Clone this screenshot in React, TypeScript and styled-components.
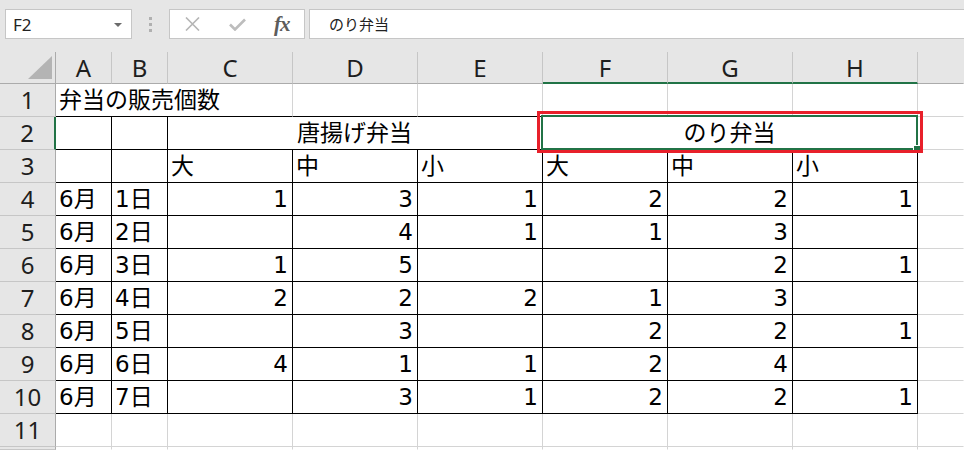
import styled, { createGlobalStyle } from "styled-components";

const GREEN = "#217346";
const GRID = "#d4d4d4";
const INK = "#000";
const EDGE = "transparent";

const GlobalStyle = createGlobalStyle`
  html, body {
    margin: 0;
    padding: 0;
    background: #fff;
    overflow: hidden;
  }
`;

const Window = styled.div`
  position: relative;
  width: 964px;
  height: 450px;
  overflow: hidden;
  background: #fff;
  font-family: "Noto Sans", sans-serif;
`;

/* ---------- formula bar ---------- */

const FormulaBar = styled.div`
  height: 52px;
  box-sizing: border-box;
  padding: 9px 0 0 5px;
  background: #e6e6e6;
  display: flex;
  align-items: flex-start;
`;

const Field = styled.div`
  height: 30px;
  box-sizing: border-box;
  background: #fff;
  border: 1px solid #c6c6c6;
  display: flex;
  align-items: center;
`;

const NameBox = styled(Field)`
  width: 127px;
  padding: 1px 9px 0 7px;
  justify-content: space-between;
  font-size: 17px;
  color: #222;
`;

const Caret = styled.span`
  width: 0;
  height: 0;
  border-left: 4px solid transparent;
  border-right: 4px solid transparent;
  border-top: 4px solid #6b6b6b;
`;

const Grip = styled.div`
  width: 37px;
  height: 30px;
  display: flex;
  flex-direction: column;
  align-items: center;
  justify-content: center;
  gap: 3px;
`;

const Dot = styled.span`
  width: 3px;
  height: 3px;
  background: #b0b0b0;
`;

const FxBox = styled(Field)`
  width: 136px;
`;

const IconSlot = styled.div`
  width: 45px;
  height: 100%;
  display: flex;
  align-items: center;
  justify-content: center;
`;

const FxGlyph = styled.span`
  font-family: "Liberation Serif", serif;
  font-style: italic;
  font-weight: bold;
  font-size: 21px;
  color: #5c5c5c;
  letter-spacing: -1px;
`;

const FormulaInput = styled(Field)`
  flex: 1;
  margin: 0 -2px 0 4px;
  padding: 0 0 1px 19px;
  font-family: "Noto Sans CJK JP", sans-serif;
  font-size: 15px;
  color: #222;
`;

/* ---------- sheet ---------- */

const Sheet = styled.div`
  display: grid;
  grid-template-columns: 56px 56px 56px repeat(6, 125px) 1fr;
  grid-template-rows: 32px repeat(11, 33px) 1fr;
  height: 398px;
`;

const Head = styled.div`
  box-sizing: border-box;
  background: #e6e6e6;
  color: #1e1e1e;
  font-family: "Noto Sans", sans-serif;
  font-size: 24px;
  text-align: center;
  white-space: nowrap;
`;

const Corner = styled(Head)`
  border-right: 1px solid #ababab;
  border-bottom: 1px solid #ababab;
  display: flex;
  align-items: flex-end;
  justify-content: flex-end;
  padding: 0 3px 4px 0;
`;

const CornerMark = styled.span`
  width: 24px;
  height: 23px;
  background: #b4b4b4;
  clip-path: polygon(100% 0, 100% 100%, 0 100%);
`;

const ColHead = styled(Head)<{ $active?: boolean; $last?: boolean }>`
  line-height: 31px;
  border-right: 1px solid ${(p) => (p.$last ? "transparent" : "#c6c6c6")};
  border-bottom: ${(p) => (p.$active ? `2px solid ${GREEN}` : "1px solid #ababab")};
`;

const RowHead = styled(Head)<{ $active?: boolean }>`
  line-height: 32px;
  border-bottom: 1px solid #c6c6c6;
  border-right: ${(p) => (p.$active ? `2px solid ${GREEN}` : "1px solid #ababab")};
`;

type Align = "left" | "center" | "right";

const Cell = styled.div<{ $r?: string; $b?: string; $align?: Align; $span?: number }>`
  box-sizing: border-box;
  grid-column: span ${(p) => p.$span ?? 1};
  border-right: 1px solid ${(p) => p.$r ?? GRID};
  border-bottom: 1px solid ${(p) => p.$b ?? GRID};
  padding: 0 4px 0 3px;
  font-family: "DejaVu Sans", "Noto Sans CJK JP", sans-serif;
  font-size: 23px;
  line-height: 32px;
  color: #000;
  text-align: ${(p) => p.$align ?? "left"};
  white-space: nowrap;
`;

/* ---------- overlays ---------- */

const Selection = styled.div`
  position: absolute;
  left: 541px;
  top: 115px;
  width: 377px;
  height: 35px;
  box-sizing: border-box;
  border: 2px solid ${GREEN};
  pointer-events: none;
`;

const FillHandle = styled.span`
  position: absolute;
  right: -4px;
  bottom: -4px;
  width: 6px;
  height: 6px;
  background: ${GREEN};
  border: 1px solid #fff;
  border-right: 0;
  border-bottom: 0;
`;

const Callout = styled.div`
  position: absolute;
  left: 537px;
  top: 111px;
  width: 386px;
  height: 42px;
  box-sizing: border-box;
  border: 3px solid #e8202a;
  pointer-events: none;
`;

/* ---------- data ---------- */

const letters = ["A", "B", "C", "D", "E", "F", "G", "H"];
const subHeads = ["大", "中", "小", "大", "中", "小"];
const sales: (number | null)[][] = [
  [1, 3, 1, 2, 2, 1],
  [null, 4, 1, 1, 3, null],
  [1, 5, null, null, 2, 1],
  [2, 2, 2, 1, 3, null],
  [null, 3, null, 2, 2, 1],
  [4, 1, 1, 2, 4, null],
  [null, 3, 1, 2, 2, 1],
];

function App() {
  return (
    <Window>
      <GlobalStyle />
      <FormulaBar>
        <NameBox>
          <span>F2</span>
          <Caret />
        </NameBox>
        <Grip>
          <Dot />
          <Dot />
          <Dot />
        </Grip>
        <FxBox>
          <IconSlot>
            <svg width="15" height="14" viewBox="0 0 15 14">
              <path d="M1 0.5 L14 13.5 M14 0.5 L1 13.5" stroke="#b5b5b5" strokeWidth="1.6" fill="none" />
            </svg>
          </IconSlot>
          <IconSlot>
            <svg width="17" height="13" viewBox="0 0 17 13">
              <path d="M1 6.5 L6 11.5 L16 1.5" stroke="#bdbdbd" strokeWidth="2.6" fill="none" />
            </svg>
          </IconSlot>
          <IconSlot>
            <FxGlyph>fx</FxGlyph>
          </IconSlot>
        </FxBox>
        <FormulaInput>のり弁当</FormulaInput>
      </FormulaBar>

      <Sheet>
        <Corner>
          <CornerMark />
        </Corner>
        {letters.map((l, i) => (
          <ColHead key={l} $active={i >= 5}>
            {l}
          </ColHead>
        ))}
        <ColHead $last />

        {/* row 1 */}
        <RowHead>1</RowHead>
        <Cell $span={3} $b={INK}>
          弁当の販売個数
        </Cell>
        {[0, 1, 2, 3, 4].map((i) => (
          <Cell key={i} $b={INK} />
        ))}
        <Cell $r={EDGE} />

        {/* row 2 */}
        <RowHead $active>2</RowHead>
        <Cell $r={INK} $b={INK} />
        <Cell $r={INK} $b={INK} />
        <Cell $span={3} $r={INK} $b={INK} $align="center">
          唐揚げ弁当
        </Cell>
        <Cell $span={3} $r={INK} $b={INK} $align="center">
          のり弁当
        </Cell>
        <Cell $r={EDGE} />

        {/* row 3 */}
        <RowHead>3</RowHead>
        <Cell $r={INK} $b={INK} />
        <Cell $r={INK} $b={INK} />
        {subHeads.map((s, i) => (
          <Cell key={i} $r={INK} $b={INK}>
            {s}
          </Cell>
        ))}
        <Cell $r={EDGE} />

        {/* rows 4-10 */}
        {sales.map((row, d) => [
          <RowHead key={`h${d}`}>{d + 4}</RowHead>,
          <Cell key={`m${d}`} $r={INK} $b={INK}>
            6月
          </Cell>,
          <Cell key={`d${d}`} $r={INK} $b={INK}>
            {d + 1}日
          </Cell>,
          ...row.map((v, i) => (
            <Cell key={`v${d}-${i}`} $r={INK} $b={INK} $align="right">
              {v ?? ""}
            </Cell>
          )),
          <Cell key={`e${d}`} $r={EDGE} />,
        ])}

        {/* row 11 */}
        <RowHead>11</RowHead>
        {letters.map((l) => (
          <Cell key={l} />
        ))}
        <Cell $r={EDGE} />

        {/* partial row */}
        <RowHead />
        {letters.map((l) => (
          <Cell key={l} $b={EDGE} />
        ))}
        <Cell $r={EDGE} $b={EDGE} />
      </Sheet>

      <Selection>
        <FillHandle />
      </Selection>
      <Callout />
    </Window>
  );
}

export default App;
